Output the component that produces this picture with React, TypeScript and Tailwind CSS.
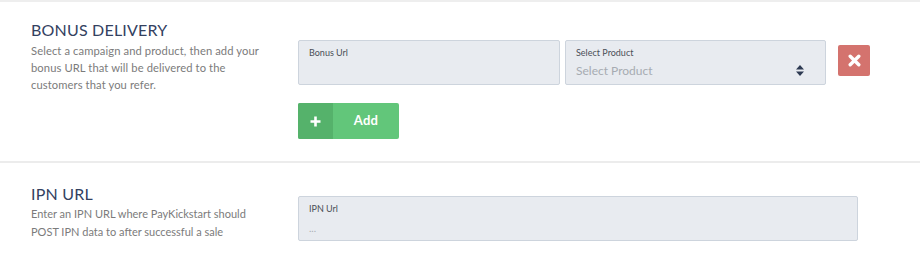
import React from 'react';

function Field({ label, placeholder, select, className }: { label: string; placeholder?: string; select?: boolean; className?: string }) {
  return (
    <div className={`relative h-[45px] rounded-[2px] border border-[#cdd4dd] bg-[#e8ebf0] px-[10px] pt-[6px] ${className ?? ''}`}>
      <div className="text-[9px] leading-[12px] text-[#4a4f57]">{label}</div>
      {placeholder && (
        <div className={`${select ? 'mt-[5px] text-[12px] text-[#a7abb2]' : 'mt-[6px] text-[10px] text-[#a9adb3]'} leading-[14px]`}>{placeholder}</div>
      )}
      {select && (
        <svg className="absolute right-[21px] top-[24px]" width="8" height="11" viewBox="0 0 8 11">
          <path d="M4 0 L8 4.5 H0 Z M0 6.5 H8 L4 11 Z" fill="#2e3a52" />
        </svg>
      )}
    </div>
  );
}

export default function App() {
  return (
    <div className="w-[920px] h-[260px] bg-white" style={{ fontFamily: 'Lato, "Open Sans", sans-serif' }}>
      <div className="h-[2px] bg-[#eeeeee]" />
      <div className="flex h-[161px] border-b-2 border-[#ececec]">
        <div className="w-[298px] pl-[31px] pt-[18px]">
          <h2 className="text-[16px] leading-[20px] tracking-[0.2px] text-[#33415f]">BONUS DELIVERY</h2>
          <p className="mt-[2px] w-[235px] text-[11.2px] leading-[17px] tracking-[0.1px] text-[#7b7b7b]">
            Select a campaign and product, then add your bonus URL that will be delivered to the customers that you refer.
          </p>
        </div>
        <div className="pt-[38px]">
          <div className="flex items-start">
            <Field label="Bonus Url" className="w-[262px]" />
            <Field label="Select Product" placeholder="Select Product" select className="ml-[5px] w-[261px]" />
            <button className="ml-[12px] mt-[5px] flex h-[31px] w-[32px] items-center justify-center rounded-[2px] bg-[#d4736e]">
              <svg width="13" height="13" viewBox="0 0 13 13">
                <path d="M2.2 2.2 L10.8 10.8 M10.8 2.2 L2.2 10.8" stroke="white" strokeWidth="3.4" strokeLinecap="round" />
              </svg>
            </button>
          </div>
          <button className="mt-[18px] flex h-[36px] w-[101px] overflow-hidden rounded-[2px] bg-[#62c67a] text-white">
            <span className="flex h-full w-[35px] items-center justify-center bg-[#55b26b]">
              <svg width="11" height="11" viewBox="0 0 11 11">
                <path d="M5.5 0.5 V10.5 M0.5 5.5 H10.5" stroke="white" strokeWidth="2.6" />
              </svg>
            </span>
            <span className="flex flex-1 items-center justify-center text-[13px] font-bold tracking-[0.3px]">Add</span>
          </button>
        </div>
      </div>
      <div className="flex">
        <div className="w-[298px] pl-[31px] pt-[21px]">
          <h2 className="text-[16px] leading-[20px] tracking-[0.2px] text-[#33415f]">IPN URL</h2>
          <p className="mt-[1px] w-[240px] text-[11px] leading-[18px] text-[#7b7b7b]">
            Enter an IPN URL where PayKickstart should POST IPN data to after successful a sale
          </p>
        </div>
        <div className="pt-[33px]">
          <Field label="IPN Url" placeholder="..." className="w-[560px]" />
        </div>
      </div>
    </div>
  );
}
